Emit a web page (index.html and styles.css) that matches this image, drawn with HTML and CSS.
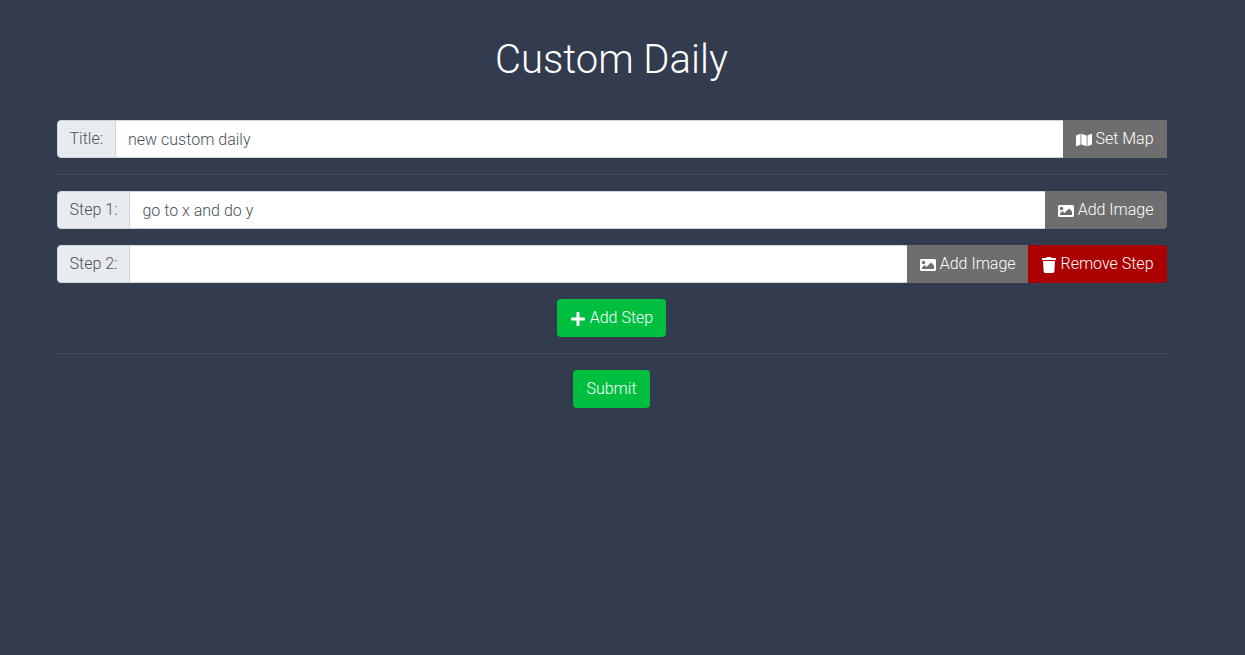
FILE: index.html
```
<!DOCTYPE html>
<html lang="en">
<head>
<meta charset="utf-8">
<meta name="viewport" content="width=device-width, initial-scale=1">
<title>Custom Daily</title>
<link rel="stylesheet" href="styles.css">
</head>
<body>
<main class="container">
  <h1 class="title">Custom Daily</h1>
  <form class="form">
    <div class="group">
      <label class="label" for="title">Title:</label>
      <input class="field" id="title" type="text" value="new custom daily">
      <button class="btn btn-gray square" type="button"><svg class="icon" viewBox="0 0 576 512" aria-hidden="true"><path d="M0 117.66v346.32c0 11.32 11.43 19.06 21.94 14.86L160 416V32L20.12 87.95A32.006 32.006 0 0 0 0 117.66zM554.06 33.16L416 96v384l139.88-55.95A31.996 31.996 0 0 0 576 394.34V48.02c0-11.32-11.43-19.06-21.94-14.86z"/><path class="fold" d="M160 32l32 0v384l-32 0zM384 96h32v384h-32z"/><path d="M192 416l192 64V96L192 32v384z"/></svg> Set Map</button>
    </div>
    <hr class="rule">
    <div class="group">
      <label class="label" for="step1">Step 1:</label>
      <input class="field" id="step1" type="text" value="go to x and do y">
      <button class="btn btn-gray" type="button"><svg class="icon" viewBox="0 0 512 512" aria-hidden="true"><path d="M464 448H48c-26.51 0-48-21.49-48-48V112c0-26.51 21.49-48 48-48h416c26.51 0 48 21.49 48 48v288c0 26.51-21.49 48-48 48zM112 120c-30.928 0-56 25.072-56 56s25.072 56 56 56 56-25.072 56-56-25.072-56-56-56zM64 384h384V272l-87.515-87.515c-4.686-4.686-12.284-4.686-16.971 0L208 320l-55.515-55.515c-4.686-4.686-12.284-4.686-16.971 0L64 336v48z"/></svg> Add Image</button>
    </div>
    <div class="group">
      <label class="label" for="step2">Step 2:</label>
      <input class="field" id="step2" type="text">
      <button class="btn btn-gray" type="button"><svg class="icon" viewBox="0 0 512 512" aria-hidden="true"><path d="M464 448H48c-26.51 0-48-21.49-48-48V112c0-26.51 21.49-48 48-48h416c26.51 0 48 21.49 48 48v288c0 26.51-21.49 48-48 48zM112 120c-30.928 0-56 25.072-56 56s25.072 56 56 56 56-25.072 56-56-25.072-56-56-56zM64 384h384V272l-87.515-87.515c-4.686-4.686-12.284-4.686-16.971 0L208 320l-55.515-55.515c-4.686-4.686-12.284-4.686-16.971 0L64 336v48z"/></svg> Add Image</button>
      <button class="btn btn-red" type="button"><svg class="icon" viewBox="0 0 448 512" aria-hidden="true"><path d="M432 32H312l-9.4-18.7A24 24 0 0 0 281.1 0H166.8a23.72 23.72 0 0 0-21.4 13.3L136 32H16A16 16 0 0 0 0 48v32a16 16 0 0 0 16 16h416a16 16 0 0 0 16-16V48a16 16 0 0 0-16-16zM53.2 467a48 48 0 0 0 47.9 45h245.8a48 48 0 0 0 47.9-45L416 128H32z"/></svg> Remove Step</button>
    </div>
    <button class="btn btn-green" type="button"><svg class="icon" viewBox="0 0 448 512" aria-hidden="true"><path d="M416 208H272V64c0-17.67-14.33-32-32-32h-32c-17.67 0-32 14.33-32 32v144H32c-17.67 0-32 14.33-32 32v32c0 17.67 14.33 32 32 32h144v144c0 17.67 14.33 32 32 32h32c17.67 0 32-14.33 32-32V304h144c17.67 0 32-14.33 32-32v-32c0-17.67-14.33-32-32-32z"/></svg> Add Step</button>
    <hr class="rule">
    <button class="btn btn-green" type="submit">Submit</button>
  </form>
</main>
</body>
</html>
```
FILE: styles.css
```
*, *::before, *::after { box-sizing: border-box; }

body {
  margin: 0;
  padding-right: 22px;
  background: #333b4f;
  color: #fff;
  font: 300 16px/24px Roboto, sans-serif;
}

.container {
  max-width: 1140px;
  margin: 0 auto;
  padding: 36px 15px;
}

.title {
  margin: 0 0 36px;
  font-size: 40px;
  line-height: 48px;
  font-weight: 300;
  text-align: center;
}

.form {
  display: flex;
  flex-direction: column;
  align-items: center;
  gap: 16px;
}

.group {
  display: flex;
  width: 100%;
}

.label {
  padding: 6px 12px;
  border: 1px solid #ced4da;
  border-radius: 4px 0 0 4px;
  background: #e9ecef;
  color: #495057;
  white-space: nowrap;
}

.field {
  flex: 1;
  min-width: 0;
  height: 38px;
  margin: 0 0 0 -1px;
  padding: 6px 12px;
  border: 1px solid #ced4da;
  border-right: 0;
  border-radius: 0;
  background: #fff;
  color: #495057;
  font: inherit;
}

.btn {
  padding: 6px 12px;
  border: 1px solid transparent;
  border-radius: 4px;
  color: #fff;
  font: inherit;
  white-space: nowrap;
  cursor: pointer;
}

.group .btn { border-radius: 0; }
.group .btn + .btn { margin-left: -1px; }
.group .btn:last-child { border-radius: 0 4px 4px 0; }
.group .square:last-child { border-radius: 0; }

.btn-gray { background: #6e6e6e; }
.btn-red { background: #ab0000; }
.btn-green { background: #00bf3f; }

.icon {
  width: 16px;
  height: 16px;
  fill: currentColor;
  vertical-align: -4px;
}

.fold { opacity: 0.3; }

.rule {
  width: 100%;
  height: 1px;
  margin: 0;
  border: 0;
  background: #474c5a;
}
```
